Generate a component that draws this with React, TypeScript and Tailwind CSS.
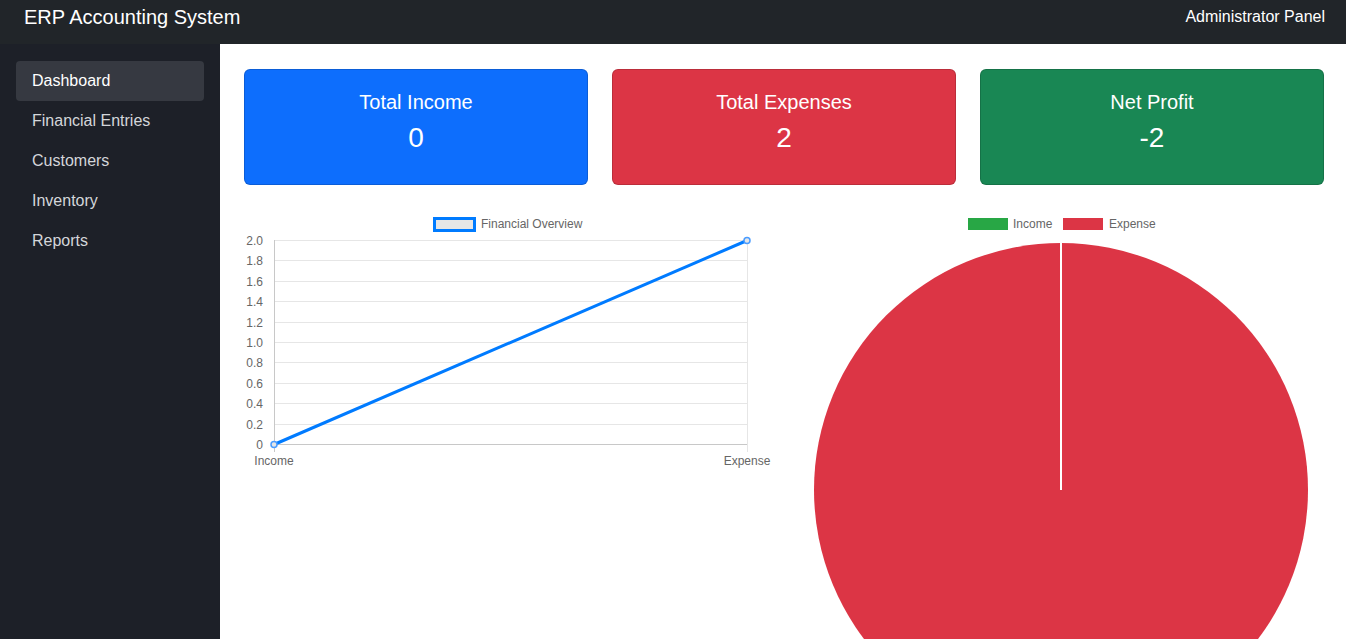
import React from "react";

const navItems = ["Dashboard", "Financial Entries", "Customers", "Inventory", "Reports"];

const summary = [
  { title: "Total Income", value: "0", color: "bg-[#0d6efd]" },
  { title: "Total Expenses", value: "2", color: "bg-[#dc3545]" },
  { title: "Net Profit", value: "-2", color: "bg-[#198754]" },
];

// line chart: Income -> Expense, y from 0 to 2
function LineChart() {
  const left = 30;
  const right = 503;
  const top = 28;
  const bottom = 232;
  const step = (bottom - top) / 10;
  const ticks = ["2.0", "1.8", "1.6", "1.4", "1.2", "1.0", "0.8", "0.6", "0.4", "0.2", "0"];

  return (
    <svg width="528" height="264" viewBox="0 0 528 264" className="block">
      {/* legend */}
      <rect x="190.5" y="6.5" width="40" height="12" fill="#e6e6e6" stroke="#007bff" strokeWidth="3" />
      <text x="237" y="16" fontSize="12" fill="#666">Financial Overview</text>

      {ticks.map((t, i) => {
        const y = Math.round(top + i * step) + 0.5;
        return (
          <g key={t}>
            <line x1={left} x2={right} y1={y} y2={y} stroke={i === 10 ? "#c8c8c8" : "#e6e6e6"} strokeWidth="1" />
            <text x="19" y={y + 4} fontSize="12" fill="#666" textAnchor="end">{t}</text>
          </g>
        );
      })}
      <line x1={left + 0.5} x2={left + 0.5} y1={top} y2={bottom + 8} stroke="#c8c8c8" />
      <line x1={right + 0.5} x2={right + 0.5} y1={top} y2={bottom + 8} stroke="#e6e6e6" />

      <text x={left} y="253" fontSize="12" fill="#666" textAnchor="middle">Income</text>
      <text x={right} y="253" fontSize="12" fill="#666" textAnchor="middle">Expense</text>

      <line x1={left} y1={bottom + 0.5} x2={right} y2={top + 0.5} stroke="#007bff" strokeWidth="3" />
      <circle cx={left} cy={bottom + 0.5} r="3" fill="#e6e6e6" stroke="#4a9cff" strokeWidth="1.5" />
      <circle cx={right} cy={top + 0.5} r="3" fill="#e6e6e6" stroke="#4a9cff" strokeWidth="1.5" />
    </svg>
  );
}

// pie chart: income slice is empty so expense takes the full circle
function PieChart() {
  return (
    <svg width="528" height="528" viewBox="0 0 528 528" className="block">
      <rect x="172" y="6" width="40" height="12" fill="#28a745" />
      <text x="217" y="16" fontSize="12" fill="#666">Income</text>
      <rect x="267" y="6" width="40" height="12" fill="#dc3545" />
      <text x="313" y="16" fontSize="12" fill="#666">Expense</text>

      <circle cx="265" cy="278" r="247" fill="#dc3545" />
      <line x1="265" y1="31" x2="265" y2="278" stroke="#fff" strokeWidth="2" />
    </svg>
  );
}

export default function App() {
  return (
    <div className="h-screen overflow-hidden flex flex-col font-['Liberation_Sans',Arial,sans-serif]">
      <header className="h-[44px] shrink-0 bg-[#212529] flex items-start justify-between px-6 pt-[5px]">
        <span className="text-white text-[20px] leading-6">ERP Accounting System</span>
        <span className="text-white text-[16px] leading-6 -mr-[3px]">Administrator Panel</span>
      </header>

      <div className="flex flex-1 min-h-0">
        <aside className="w-[220px] shrink-0 bg-[#1d2028] px-4 pt-[17px]">
          <nav className="flex flex-col">
            {navItems.map((item, i) => (
              <a
                key={item}
                href="#"
                className={`h-10 flex items-center px-4 text-[16px] rounded-sm ${
                  i === 0 ? "bg-[#363941] text-white" : "text-[#d4d6da]"
                }`}
              >
                {item}
              </a>
            ))}
          </nav>
        </aside>

        <main className="flex-1 bg-white pl-6 pr-[22px] pt-[25px] overflow-hidden">
          <div className="grid grid-cols-3 gap-6">
            {summary.map(card => (
              <div
                key={card.title}
                className={`${card.color} h-[116px] rounded-md border border-black/15 text-white text-center pt-[20px]`}
              >
                <div className="text-[20px] leading-6 mb-[7px]">{card.title}</div>
                <div className="text-[28px] leading-[34px]">{card.value}</div>
              </div>
            ))}
          </div>

          <div className="grid grid-cols-2 gap-6 mt-[27px]">
            <div>
              <LineChart />
            </div>
            <div>
              <PieChart />
            </div>
          </div>
        </main>
      </div>
    </div>
  );
}
